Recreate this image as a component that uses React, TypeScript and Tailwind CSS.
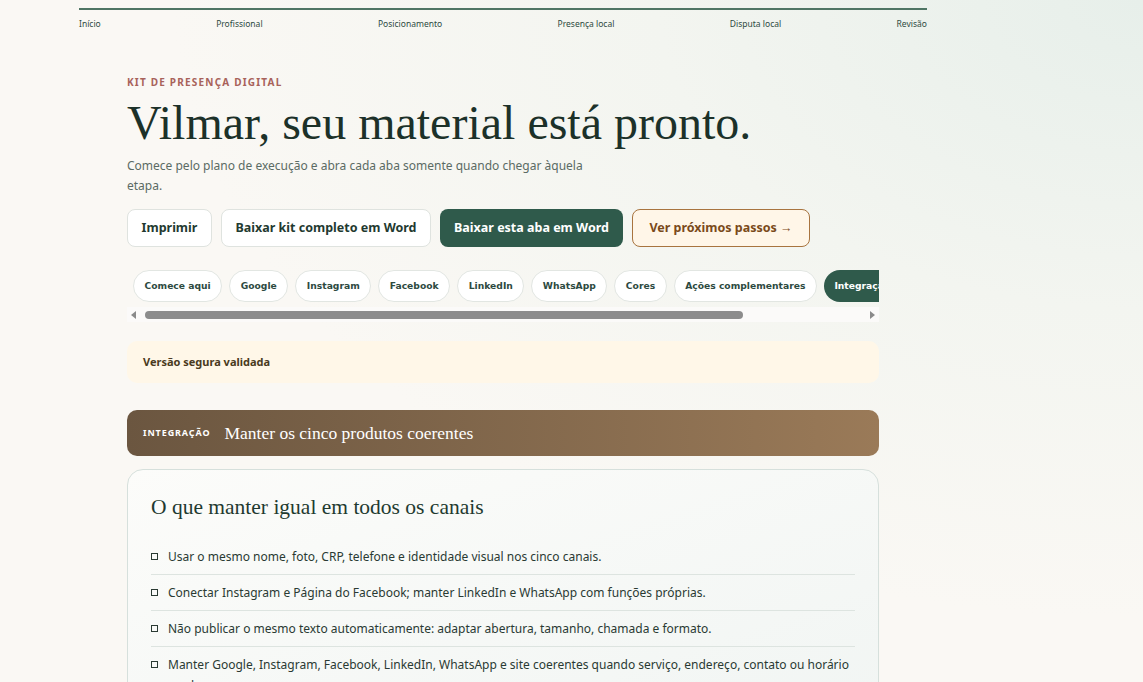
import React from 'react';

const navSteps = ['Início', 'Profissional', 'Posicionamento', 'Presença local', 'Disputa local', 'Revisão'];

const tabs = [
  'Comece aqui',
  'Google',
  'Instagram',
  'Facebook',
  'LinkedIn',
  'WhatsApp',
  'Cores',
  'Ações complementares',
  'Integração',
  'Próximos passos',
];

const checklist = [
  'Usar o mesmo nome, foto, CRP, telefone e identidade visual nos cinco canais.',
  'Conectar Instagram e Página do Facebook; manter LinkedIn e WhatsApp com funções próprias.',
  'Não publicar o mesmo texto automaticamente: adaptar abertura, tamanho, chamada e formato.',
  'Manter Google, Instagram, Facebook, LinkedIn, WhatsApp e site coerentes quando serviço, endereço, contato ou horário mudar.',
];

const serif = "font-['Liberation_Serif',Georgia,serif]";

const App = () => {
  const activeTab = 'Integração';

  return (
    <div className="min-h-[682px] bg-[#faf8f4] bg-[radial-gradient(ellipse_at_top_right,#e7efea_0%,#f3f5f0_30%,#faf8f4_60%)] font-['Noto_Sans',sans-serif] text-[#1f3a30]">
      <div className="w-[1006px]">
        {/* progress nav */}
        <nav className="ml-[79px] w-[848px] pt-2">
          <div className="h-[2px] bg-[#4f7564]" />
          <div className="mt-[8px] flex justify-between text-[8.5px] leading-[12px] text-[#2d4a3f]">
            {navSteps.map((step) => (
              <span key={step}>{step}</span>
            ))}
          </div>
        </nav>

        <main className="ml-[127px] w-[752px] pt-[45px]">
          <p className="text-[10px] font-bold uppercase leading-[14px] tracking-[0.12em] text-[#a8625a]">
            Kit de presença digital
          </p>
          <h1 className={`${serif} mt-[4px] text-[48px] leading-[60px] text-[#1c3129]`}>
            Vilmar, seu material está pronto.
          </h1>
          <p className="mt-[3px] max-w-[470px] text-[12px] leading-[20px] text-[#5b6b64]">
            Comece pelo plano de execução e abra cada aba somente quando chegar àquela etapa.
          </p>

          <div className="mt-[13px] flex gap-[9px]">
            <button className="h-[38px] w-[85px] rounded-lg border border-[#dfe3df] bg-white text-[12.5px] font-bold text-[#1f3a30]">
              Imprimir
            </button>
            <button className="h-[38px] w-[210px] rounded-lg border border-[#dfe3df] bg-white text-[12.5px] font-bold text-[#1f3a30]">
              Baixar kit completo em Word
            </button>
            <button className="h-[38px] w-[183px] rounded-lg bg-[#2f5a4b] text-[12.5px] font-bold text-white">
              Baixar esta aba em Word
            </button>
            <button className="h-[38px] w-[178px] rounded-lg border border-[#a8743f] bg-[#fff6e8] text-[12.5px] font-bold text-[#7a4a1a]">
              Ver próximos passos →
            </button>
          </div>

          {/* tabs */}
          <div className="mt-[23px] overflow-hidden px-[6px]">
            <div className="flex w-max gap-[7px]">
              {tabs.map((tab) => (
                <button
                  key={tab}
                  className={
                    tab === activeTab
                      ? "h-[32px] shrink-0 rounded-full bg-[#2f5a4b] px-[10.5px] font-['DejaVu_Sans',sans-serif] text-[9.2px] font-bold text-white"
                      : "h-[32px] shrink-0 rounded-full border border-[#e2e6e2] bg-white px-[10.5px] font-['DejaVu_Sans',sans-serif] text-[9.2px] font-bold text-[#2d4a3f]"
                  }
                >
                  {tab}
                </button>
              ))}
            </div>
          </div>
          {/* scrollbar */}
          <div className="mt-[5px] flex h-[15px] items-center bg-[#fbfaf9] px-[4px]">
            <svg width="6" height="8" viewBox="0 0 6 8" className="shrink-0">
              <path d="M5 0 L0 4 L5 8 Z" fill="#8a8a8a" />
            </svg>
            <div className="ml-[8px] h-[8px] w-[598px] rounded-full bg-[#8c8c8c]" />
            <div className="flex-1" />
            <svg width="6" height="8" viewBox="0 0 6 8" className="shrink-0">
              <path d="M1 0 L6 4 L1 8 Z" fill="#8a8a8a" />
            </svg>
          </div>

          <div className="mt-[19px] flex h-[42px] items-center rounded-[10px] bg-[#fff7e8] px-4 text-[11px] font-bold text-[#4a3a20]">
            Versão segura validada
          </div>

          <div className="mt-[27px] flex h-[46px] items-center gap-[14px] rounded-[10px] bg-gradient-to-r from-[#6b5640] to-[#9a7a58] px-4">
            <span className="text-[9px] font-bold uppercase tracking-[0.1em] text-white">Integração</span>
            <span className={`${serif} text-[17.5px] text-white`}>Manter os cinco produtos coerentes</span>
          </div>

          <section className="mt-[13px] rounded-2xl border border-[#d6e0dc] bg-gradient-to-br from-[#fcfcfa] to-[#f1f5f3] px-[23px] pt-[22px] pb-6">
            <h2 className={`${serif} text-[21.5px] leading-[30px] text-[#1f3a30]`}>
              O que manter igual em todos os canais
            </h2>
            <ul className="mt-[17px]">
              {checklist.map((item, i) => (
                <li
                  key={i}
                  className={`flex items-start gap-[10px] py-[7px] text-[12px] leading-[21px] text-[#2a3a33] ${
                    i < checklist.length - 1 ? 'border-b border-[#dde4e0]' : ''
                  }`}
                >
                  <span className="mt-[7px] h-[7px] w-[7px] shrink-0 border border-[#2a3a33]" />
                  <span>{item}</span>
                </li>
              ))}
            </ul>
          </section>
        </main>
      </div>
    </div>
  );
};

export default App;
